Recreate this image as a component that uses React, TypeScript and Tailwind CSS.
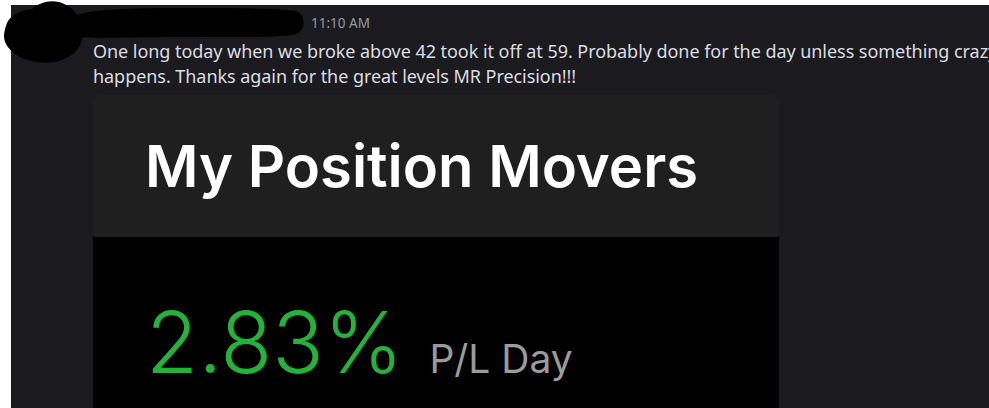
import React from "react";

function Redaction() {
  return (
    <svg
      className="absolute left-0 top-0"
      width="320"
      height="70"
      viewBox="0 0 320 70"
    >
      <path
        d="M6 26 C8 16 20 10 32 9 C40 2 54 -2 66 5 C74 9 78 14 78 20 L84 22 C84 40 80 52 66 58 C56 64 40 64 28 60 C14 56 4 46 4 36 C4 32 5 29 6 26 Z"
        fill="#000"
      />
      <path
        d="M74 16 C90 9 130 8 180 8 C230 8 282 8 296 11 C306 14 306 31 296 34 C280 38 230 37 180 37 C130 37 96 39 80 37 C70 35 68 20 74 16 Z"
        fill="#000"
      />
    </svg>
  );
}

function PositionCard() {
  return (
    <div className="w-[686px] mt-[6px] rounded-t-[8px] overflow-hidden">
      <div className="h-[142px] bg-[#1f1f1f] pl-[52px] pt-[42px]">
        <div className="font-['Inter',sans-serif] text-[58px] leading-none font-semibold text-white">
          My Position Movers
        </div>
      </div>
      <div className="h-[200px] bg-black pl-[53px] pt-[63px]">
        <div className="flex items-baseline">
          <span className="font-['Inter',sans-serif] text-[85px] leading-none font-light text-[#23b23a]">
            2.83%
          </span>
          <span className="ml-[26px] font-['Inter',sans-serif] text-[39px] leading-none text-[#9b9b9b]">
            P/L Day
          </span>
        </div>
      </div>
    </div>
  );
}

export default function App() {
  return (
    <div className="relative w-[989px] h-[408px] bg-white pl-[11px] pt-[5px] overflow-hidden">
      <div className="h-full bg-[#1b1a1f] overflow-hidden pl-[82px]">
        <div className="pt-[9px] pl-[218px] h-[27px] font-['Noto_Sans',sans-serif] text-[13.5px] leading-[18px] text-[#949ba4]">
          11:10 AM
        </div>
        <div className="mt-[7px] font-['Noto_Sans',sans-serif] text-[18px] leading-[25px] text-[#dbdee1] whitespace-nowrap tracking-[-0.05px]">
          One long today when we broke above 42 took it off at 59. Probably done for the day unless something crazy
          <br />
          happens. Thanks again for the great levels MR Precision!!!
        </div>
        <PositionCard />
      </div>
      <Redaction />
    </div>
  );
}
